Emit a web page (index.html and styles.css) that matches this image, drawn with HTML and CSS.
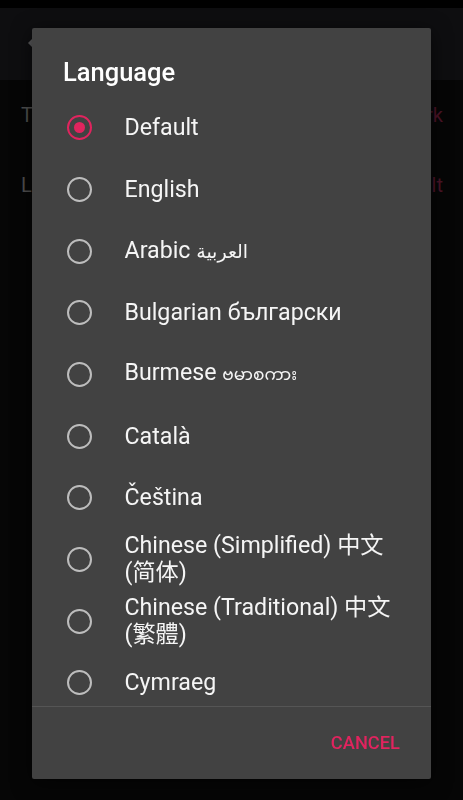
FILE: index.html
```html
<!DOCTYPE html>
<html>
<head>
<meta charset="utf-8">
<link rel="stylesheet" href="styles.css">
</head>
<body>
<div class="screen">
  <div class="statusbar"></div>
  <div class="appbar">
    <svg class="back" width="24" height="24" viewBox="0 0 24 24"><path d="M20 11H7.83l5.59-5.59L12 4l-8 8 8 8 1.41-1.41L7.83 13H20v-2z" fill="#5a5a5c"/></svg>
  </div>
  <div class="settings">
    <div class="setting"><span class="s-label">Theme</span><span class="s-value">Dark</span></div>
    <div class="setting"><span class="s-label">Language</span><span class="s-value">Default</span></div>
  </div>
</div>

<div class="dialog">
  <div class="title">Language</div>
  <div class="list">
    <div class="item"><span class="radio checked"></span><span class="label">Default</span></div>
    <div class="item"><span class="radio"></span><span class="label">English</span></div>
    <div class="item"><span class="radio"></span><span class="label">Arabic <span class="ar">العربية</span></span></div>
    <div class="item"><span class="radio"></span><span class="label">Bulgarian български</span></div>
    <div class="item"><span class="radio"></span><span class="label">Burmese <span class="my">ဗမာစကား</span></span></div>
    <div class="item"><span class="radio"></span><span class="label">Català</span></div>
    <div class="item"><span class="radio"></span><span class="label">Čeština</span></div>
    <div class="item"><span class="radio"></span><span class="label sc">Chinese (Simplified) 中文 (简体)</span></div>
    <div class="item"><span class="radio"></span><span class="label tc">Chinese (Traditional) 中文 (繁體)</span></div>
    <div class="item"><span class="radio"></span><span class="label">Cymraeg</span></div>
  </div>
  <div class="actions">
    <span class="btn">CANCEL</span>
  </div>
</div>
</body>
</html>
```

FILE: styles.css
```css
html, body {
  margin: 0;
  padding: 0;
  background: #060606;
  font-family: Roboto, "Noto Sans", sans-serif;
}
.screen {
  width: 463px;
  height: 800px;
  display: flex;
  flex-direction: column;
}
.statusbar {
  height: 8px;
  background: #000;
}
.appbar {
  height: 72px;
  background: #0e0e10;
  display: flex;
  align-items: center;
  padding-left: 24px;
}
.back {
  margin-top: -2px;
}
.settings {
  display: flex;
  flex-direction: column;
}
.setting {
  height: 70px;
  display: flex;
  align-items: center;
  justify-content: space-between;
  padding: 0 20px 0 21px;
  font-size: 20px;
}
.s-label { color: #505050; }
.s-value { color: #4c1428; }

.dialog {
  position: fixed;
  left: 32px;
  top: 28px;
  width: 399px;
  height: 751px;
  background: #424242;
  border-radius: 2px;
  box-shadow: 0 4px 20px rgba(0,0,0,0.6);
  display: flex;
  flex-direction: column;
  overflow: hidden;
}
.title {
  color: #fff;
  font-size: 25.5px;
  font-weight: 500;
  padding: 29px 0 0 31px;
  height: 40px;
  line-height: 30px;
}
.list {
  flex: 1;
  overflow: hidden;
}
.item {
  box-sizing: border-box;
  height: 61.67px;
  display: flex;
  align-items: center;
  padding-left: 34.5px;
  padding-right: 30px;
}
.radio {
  flex: none;
  width: 21px;
  height: 21px;
  border: 2.6px solid #bdbdbd;
  border-radius: 50%;
  position: relative;
  margin-right: 33px;
}
.radio.checked {
  border-color: #e0245e;
}
.radio.checked::after {
  content: "";
  position: absolute;
  left: 5px;
  top: 5px;
  width: 11px;
  height: 11px;
  border-radius: 50%;
  background: #e0245e;
}
.label {
  color: #f5f5f5;
  font-size: 23.2px;
  line-height: 27px;
}
.ar { font-family: "DejaVu Sans", sans-serif; font-size: 19px; }
.my { font-family: "Noto Sans Myanmar", "DejaVu Sans", sans-serif; font-size: 17px; }
.sc { font-family: Roboto, "Noto Sans CJK SC", sans-serif; }
.tc { font-family: Roboto, "Noto Sans CJK TC", sans-serif; }
.actions {
  flex: none;
  height: 72px;
  border-top: 1px solid #555;
  display: flex;
  align-items: center;
  justify-content: flex-end;
  padding-right: 31px;
}
.btn {
  color: #e0245e;
  font-size: 18.3px;
  font-weight: 500;
  padding-bottom: 2px;
}
```
